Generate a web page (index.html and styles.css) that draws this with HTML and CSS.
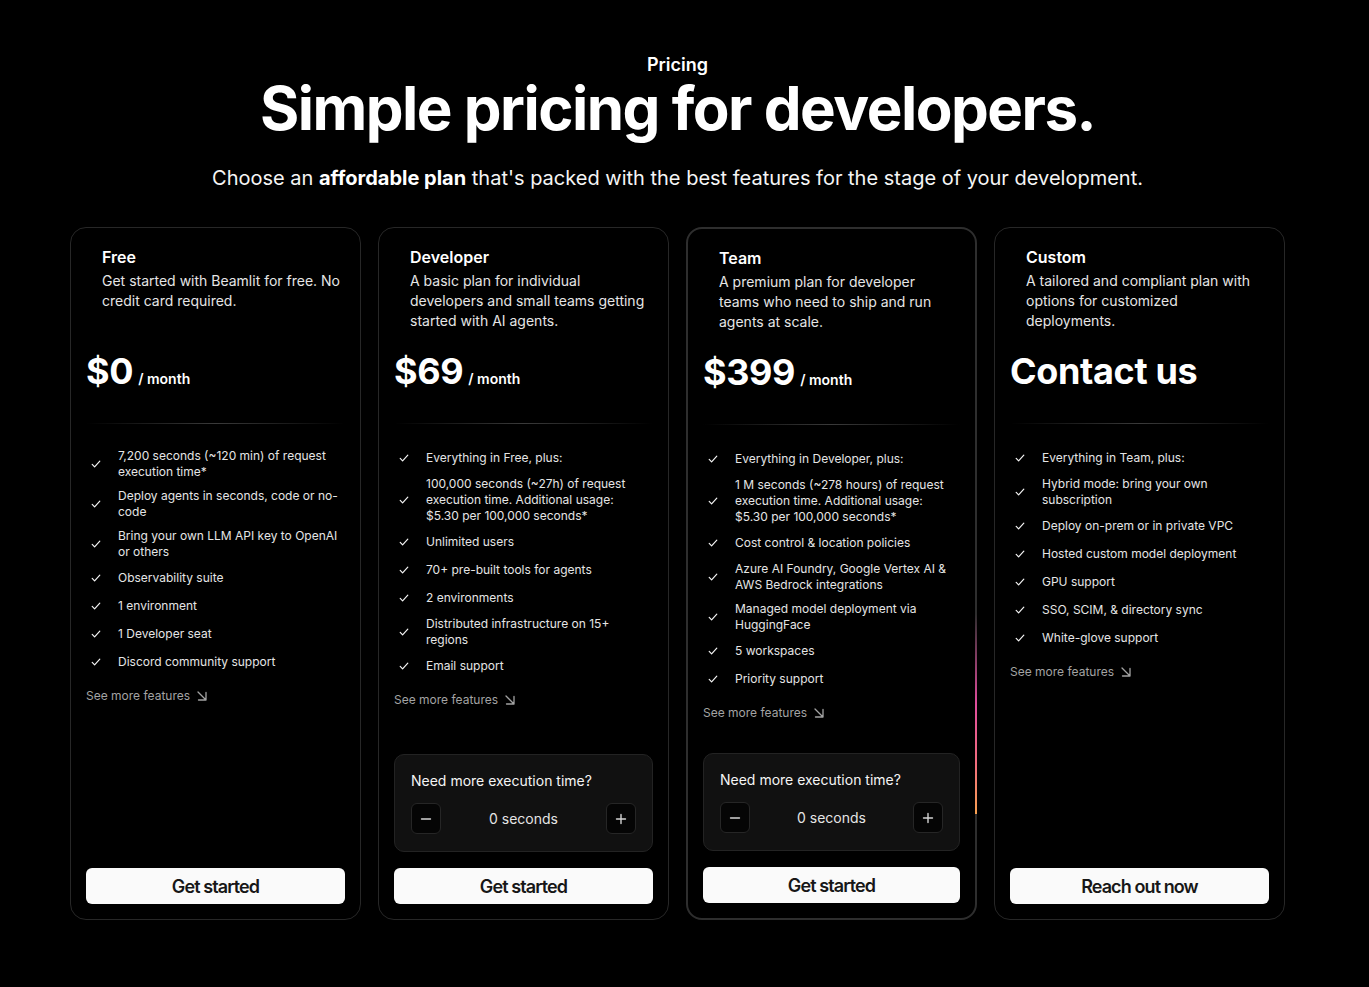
FILE: index.html
```html
<!DOCTYPE html>
<html lang="en">
<head>
<meta charset="utf-8">
<title>Pricing</title>
<link rel="stylesheet" href="styles.css">
</head>
<body>
<div class="page">
  <section class="hero">
    <p class="eyebrow">Pricing</p>
    <h1 class="headline">Simple pricing for developers.</h1>
    <p class="lead">Choose an <strong>affordable plan</strong> that's packed with the best features for the stage of your development.</p>
  </section>

  <div class="plans">
    <!-- Free -->
    <article class="card">
      <div class="plan-head">
        <h2 class="plan-name">Free</h2>
        <p class="plan-desc">Get started with Beamlit for free. No credit card required.</p>
      </div>
      <div class="price"><span class="amount">$0</span><span class="per">/ month</span></div>
      <div class="sep"></div>
      <ul class="features">
        <li><span class="check"><svg viewBox="0 0 12 12"><path d="M2.2 6.4 4.6 8.8 9.8 3.2"/></svg></span><span>7,200 seconds (~120 min) of request execution time*</span></li>
        <li><span class="check"><svg viewBox="0 0 12 12"><path d="M2.2 6.4 4.6 8.8 9.8 3.2"/></svg></span><span>Deploy agents in seconds, code or no-code</span></li>
        <li><span class="check"><svg viewBox="0 0 12 12"><path d="M2.2 6.4 4.6 8.8 9.8 3.2"/></svg></span><span>Bring your own LLM API key to OpenAI or others</span></li>
        <li><span class="check"><svg viewBox="0 0 12 12"><path d="M2.2 6.4 4.6 8.8 9.8 3.2"/></svg></span><span>Observability suite</span></li>
        <li><span class="check"><svg viewBox="0 0 12 12"><path d="M2.2 6.4 4.6 8.8 9.8 3.2"/></svg></span><span>1 environment</span></li>
        <li><span class="check"><svg viewBox="0 0 12 12"><path d="M2.2 6.4 4.6 8.8 9.8 3.2"/></svg></span><span>1 Developer seat</span></li>
        <li><span class="check"><svg viewBox="0 0 12 12"><path d="M2.2 6.4 4.6 8.8 9.8 3.2"/></svg></span><span>Discord community support</span></li>
      </ul>
      <a class="more">See more features <svg viewBox="0 0 10 10"><path d="M1 1l8 8M9 1.5V9H1.5"/></svg></a>
      <div class="bottom">
        <button class="cta">Get started</button>
      </div>
    </article>

    <!-- Developer -->
    <article class="card">
      <div class="plan-head">
        <h2 class="plan-name">Developer</h2>
        <p class="plan-desc">A basic plan for individual developers and small teams getting started with AI agents.</p>
      </div>
      <div class="price"><span class="amount">$69</span><span class="per">/ month</span></div>
      <div class="sep"></div>
      <ul class="features">
        <li><span class="check"><svg viewBox="0 0 12 12"><path d="M2.2 6.4 4.6 8.8 9.8 3.2"/></svg></span><span>Everything in Free, plus:</span></li>
        <li><span class="check"><svg viewBox="0 0 12 12"><path d="M2.2 6.4 4.6 8.8 9.8 3.2"/></svg></span><span>100,000 seconds (~27h) of request execution time. Additional usage: $5.30 per 100,000 seconds*</span></li>
        <li><span class="check"><svg viewBox="0 0 12 12"><path d="M2.2 6.4 4.6 8.8 9.8 3.2"/></svg></span><span>Unlimited users</span></li>
        <li><span class="check"><svg viewBox="0 0 12 12"><path d="M2.2 6.4 4.6 8.8 9.8 3.2"/></svg></span><span>70+ pre-built tools for agents</span></li>
        <li><span class="check"><svg viewBox="0 0 12 12"><path d="M2.2 6.4 4.6 8.8 9.8 3.2"/></svg></span><span>2 environments</span></li>
        <li><span class="check"><svg viewBox="0 0 12 12"><path d="M2.2 6.4 4.6 8.8 9.8 3.2"/></svg></span><span>Distributed infrastructure on 15+ regions</span></li>
        <li><span class="check"><svg viewBox="0 0 12 12"><path d="M2.2 6.4 4.6 8.8 9.8 3.2"/></svg></span><span>Email support</span></li>
      </ul>
      <a class="more">See more features <svg viewBox="0 0 10 10"><path d="M1 1l8 8M9 1.5V9H1.5"/></svg></a>
      <div class="bottom">
        <div class="extra">
          <p class="extra-title">Need more execution time?</p>
          <div class="stepper">
            <button class="step" aria-label="decrease"><svg viewBox="0 0 12 12"><path d="M1.5 6h9"/></svg></button>
            <span class="step-value">0 seconds</span>
            <button class="step" aria-label="increase"><svg viewBox="0 0 12 12"><path d="M1.5 6h9M6 1.5v9"/></svg></button>
          </div>
        </div>
        <button class="cta">Get started</button>
      </div>
    </article>

    <!-- Team -->
    <article class="card card-featured">
      <span class="beam"></span>
      <div class="plan-head">
        <h2 class="plan-name">Team</h2>
        <p class="plan-desc">A premium plan for developer teams who need to ship and run agents at scale.</p>
      </div>
      <div class="price"><span class="amount">$399</span><span class="per">/ month</span></div>
      <div class="sep"></div>
      <ul class="features">
        <li><span class="check"><svg viewBox="0 0 12 12"><path d="M2.2 6.4 4.6 8.8 9.8 3.2"/></svg></span><span>Everything in Developer, plus:</span></li>
        <li><span class="check"><svg viewBox="0 0 12 12"><path d="M2.2 6.4 4.6 8.8 9.8 3.2"/></svg></span><span>1 M seconds (~278 hours) of request execution time. Additional usage: $5.30 per 100,000 seconds*</span></li>
        <li><span class="check"><svg viewBox="0 0 12 12"><path d="M2.2 6.4 4.6 8.8 9.8 3.2"/></svg></span><span>Cost control &amp; location policies</span></li>
        <li><span class="check"><svg viewBox="0 0 12 12"><path d="M2.2 6.4 4.6 8.8 9.8 3.2"/></svg></span><span>Azure AI Foundry, Google Vertex AI &amp; AWS Bedrock integrations</span></li>
        <li><span class="check"><svg viewBox="0 0 12 12"><path d="M2.2 6.4 4.6 8.8 9.8 3.2"/></svg></span><span>Managed model deployment via HuggingFace</span></li>
        <li><span class="check"><svg viewBox="0 0 12 12"><path d="M2.2 6.4 4.6 8.8 9.8 3.2"/></svg></span><span>5 workspaces</span></li>
        <li><span class="check"><svg viewBox="0 0 12 12"><path d="M2.2 6.4 4.6 8.8 9.8 3.2"/></svg></span><span>Priority support</span></li>
      </ul>
      <a class="more">See more features <svg viewBox="0 0 10 10"><path d="M1 1l8 8M9 1.5V9H1.5"/></svg></a>
      <div class="bottom">
        <div class="extra">
          <p class="extra-title">Need more execution time?</p>
          <div class="stepper">
            <button class="step" aria-label="decrease"><svg viewBox="0 0 12 12"><path d="M1.5 6h9"/></svg></button>
            <span class="step-value">0 seconds</span>
            <button class="step" aria-label="increase"><svg viewBox="0 0 12 12"><path d="M1.5 6h9M6 1.5v9"/></svg></button>
          </div>
        </div>
        <button class="cta">Get started</button>
      </div>
    </article>

    <!-- Custom -->
    <article class="card">
      <div class="plan-head">
        <h2 class="plan-name">Custom</h2>
        <p class="plan-desc">A tailored and compliant plan with options for customized deployments.</p>
      </div>
      <div class="price"><span class="amount">Contact us</span></div>
      <div class="sep"></div>
      <ul class="features">
        <li><span class="check"><svg viewBox="0 0 12 12"><path d="M2.2 6.4 4.6 8.8 9.8 3.2"/></svg></span><span>Everything in Team, plus:</span></li>
        <li><span class="check"><svg viewBox="0 0 12 12"><path d="M2.2 6.4 4.6 8.8 9.8 3.2"/></svg></span><span>Hybrid mode: bring your own subscription</span></li>
        <li><span class="check"><svg viewBox="0 0 12 12"><path d="M2.2 6.4 4.6 8.8 9.8 3.2"/></svg></span><span>Deploy on-prem or in private VPC</span></li>
        <li><span class="check"><svg viewBox="0 0 12 12"><path d="M2.2 6.4 4.6 8.8 9.8 3.2"/></svg></span><span>Hosted custom model deployment</span></li>
        <li><span class="check"><svg viewBox="0 0 12 12"><path d="M2.2 6.4 4.6 8.8 9.8 3.2"/></svg></span><span>GPU support</span></li>
        <li><span class="check"><svg viewBox="0 0 12 12"><path d="M2.2 6.4 4.6 8.8 9.8 3.2"/></svg></span><span>SSO, SCIM, &amp; directory sync</span></li>
        <li><span class="check"><svg viewBox="0 0 12 12"><path d="M2.2 6.4 4.6 8.8 9.8 3.2"/></svg></span><span>White-glove support</span></li>
      </ul>
      <a class="more">See more features <svg viewBox="0 0 10 10"><path d="M1 1l8 8M9 1.5V9H1.5"/></svg></a>
      <div class="bottom">
        <button class="cta">Reach out now</button>
      </div>
    </article>
  </div>
</div>
</body>
</html>
```

FILE: styles.css
```css
* { box-sizing: border-box; }

html, body {
  margin: 0;
  padding: 0;
  background: #000;
  color: #fff;
  font-family: Inter, "Noto Sans", "Liberation Sans", sans-serif;
}

.page {
  width: 1355px;
  padding: 51px 0 60px;
}

.hero {
  text-align: center;
}

.eyebrow {
  margin: 0;
  font-size: 18px;
  line-height: 27px;
  font-weight: 600;
}

.headline {
  margin: 0;
  font-size: 60px;
  line-height: 60px;
  font-weight: 700;
  letter-spacing: -0.025em;
}

.lead {
  margin: 26px 0 0;
  font-size: 20px;
  line-height: 28px;
  font-weight: 400;
  color: #f5f5f5;
}

.lead strong { font-weight: 700; color: #fff; }

.plans {
  margin: 35px auto 0;
  width: 1215px;
  display: grid;
  grid-template-columns: repeat(4, 291px);
  gap: 17px;
}

.card {
  position: relative;
  height: 693px;
  border: 1px solid #272727;
  border-radius: 16px;
  padding: 16px 15px 15px;
  display: flex;
  flex-direction: column;
  background: #000;
}

.card-featured {
  border: 2px solid #2e2e2e;
}

.beam {
  position: absolute;
  right: -2px;
  top: 385px;
  width: 2px;
  height: 200px;
  background: linear-gradient(to bottom, rgba(236, 72, 153, 0) 0%, #e04d9d 45%, #f26d7d 75%, #f7a150 100%);
}

.plan-head {
  padding: 0 4px 0 16px;
}

.plan-name {
  margin: 0;
  font-size: 16px;
  line-height: 27px;
  font-weight: 600;
}

.plan-desc {
  margin: 0;
  min-height: 60px;
  font-size: 14px;
  line-height: 20px;
  color: #e5e5e5;
}

.price {
  margin-top: 20px;
  display: flex;
  align-items: baseline;
  gap: 5px;
  height: 40px;
}

.amount {
  font-size: 36px;
  line-height: 40px;
  font-weight: 700;
  letter-spacing: -0.01em;
}

.per {
  font-size: 14px;
  font-weight: 600;
}

.sep {
  margin-top: 32px;
  height: 1px;
  background: linear-gradient(to right, rgba(64,64,64,0) 0%, #3a3a3a 50%, rgba(64,64,64,0) 100%);
}

.features {
  list-style: none;
  margin: 24px 0 0;
  padding: 0 4px 0 0;
  display: flex;
  flex-direction: column;
  gap: 8px;
}

.features li {
  display: flex;
  align-items: center;
  gap: 12px;
  min-height: 20px;
  font-size: 12px;
  line-height: 16px;
  color: #e5e5e5;
}

.check {
  flex: 0 0 20px;
  width: 20px;
  height: 20px;
  display: flex;
  align-items: center;
  justify-content: center;
}

.check svg {
  width: 12px;
  height: 12px;
  fill: none;
  stroke: #f5f5f5;
  stroke-width: 1.2;
  stroke-linecap: round;
  stroke-linejoin: round;
}

.more {
  margin-top: 16px;
  display: inline-flex;
  align-items: center;
  gap: 7px;
  font-size: 12px;
  line-height: 16px;
  color: #a3a3a3;
  align-self: flex-start;
}

.more svg {
  width: 10px;
  height: 10px;
  fill: none;
  stroke: #a3a3a3;
  stroke-width: 1.3;
  stroke-linecap: round;
  stroke-linejoin: round;
}

.bottom {
  margin-top: auto;
  display: flex;
  flex-direction: column;
  gap: 16px;
}

.extra {
  border: 1px solid #232323;
  border-radius: 10px;
  background: #111;
  padding: 16px 16px 17px;
}

.extra-title {
  margin: 0;
  font-size: 14px;
  line-height: 20px;
  color: #f5f5f5;
}

.stepper {
  margin-top: 12px;
  display: flex;
  align-items: center;
  justify-content: space-between;
}

.step {
  width: 30px;
  height: 31px;
  padding: 0;
  border: 1px solid #262626;
  border-radius: 6px;
  background: #050505;
  display: flex;
  align-items: center;
  justify-content: center;
}

.step svg {
  width: 12px;
  height: 12px;
  fill: none;
  stroke: #d4d4d4;
  stroke-width: 1.4;
  stroke-linecap: round;
}

.step-value {
  font-size: 14px;
  line-height: 20px;
  color: #e5e5e5;
}

.cta {
  height: 36px;
  width: 100%;
  border: none;
  border-radius: 6px;
  background: #fafafa;
  color: #171717;
  font-family: Inter, "Noto Sans", "Liberation Sans", sans-serif;
  font-size: 18px;
  font-weight: 600;
  letter-spacing: -0.05em;
}
```
